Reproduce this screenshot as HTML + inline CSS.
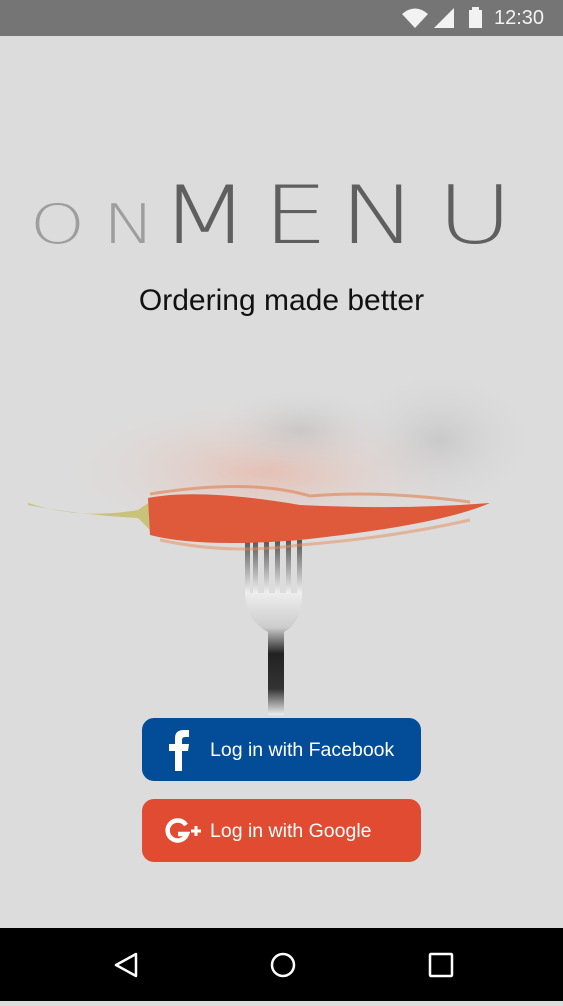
<!DOCTYPE html>
<html><head><meta charset="utf-8"><style>
html,body{margin:0;padding:0;}
body{width:563px;height:1001px;position:relative;background:#dcdcdc;overflow:hidden;font-family:"Liberation Sans",sans-serif;}
.sb{position:absolute;left:0;top:0;width:563px;height:36px;background:#757575;}
.time{position:absolute;left:494px;top:7px;color:#f2f2f2;font-size:20px;}
.nav{position:absolute;left:0;top:928px;width:563px;height:73px;background:#000;}
.logo{position:absolute;left:0;top:160px;}
.tag{position:absolute;left:0;width:563px;top:284px;text-align:center;font-size:30px;color:#111;font-family:"Liberation Sans",sans-serif;}
.btn{position:absolute;left:142px;width:279px;height:63px;border-radius:12px;color:#fff;font-size:19.5px;font-family:"Liberation Sans",sans-serif;}
.btn span{position:absolute;left:68px;top:21px;}
.fb{top:718px;background:#034c97;}
.gg{top:799px;background:#e04b32;}
</style></head><body>
<div class="sb">
<svg width="563" height="36" style="position:absolute;left:0;top:0">
<path d="M402 14 Q415 3 428 14 L415 28 Z" fill="#f2f2f2"/>
<path d="M434 28 L454 8 L454 28 Z" fill="#f2f2f2"/>
<rect x="469" y="10" width="13" height="18" fill="#f2f2f2"/><rect x="472" y="7" width="7" height="4" fill="#f2f2f2"/>
</svg>
<div class="time">12:30</div>
</div>
<svg class="logo" width="563" height="100">
<g transform="translate(0,83) scale(1.3,1)">
<text y="0" font-family="DejaVu Sans" font-weight="200" font-size="54" fill="#9e9e9e"><tspan x="23">O</tspan><tspan x="79">N</tspan></text>
<text y="0" font-family="DejaVu Sans" font-weight="200" font-size="80" fill="#5f5f5f"><tspan x="123">M</tspan><tspan x="202">E</tspan><tspan x="261">N</tspan><tspan x="336">U</tspan></text>
</g>
</svg>
<div class="tag">Ordering made better</div>
<svg width="563" height="360" style="position:absolute;left:0;top:360px">
<defs>
<radialGradient id="g1" cx="0.5" cy="0.5" r="0.5"><stop offset="0" stop-color="#e8b7a8" stop-opacity="0.8"/><stop offset="1" stop-color="#e0e0e0" stop-opacity="0"/></radialGradient>
<radialGradient id="g2" cx="0.5" cy="0.5" r="0.5"><stop offset="0" stop-color="#bdbdbd" stop-opacity="0.6"/><stop offset="1" stop-color="#e0e0e0" stop-opacity="0"/></radialGradient>
<linearGradient id="fk" x1="0" y1="0" x2="0" y2="1"><stop offset="0" stop-color="#555"/><stop offset="0.3" stop-color="#eee"/><stop offset="0.5" stop-color="#ccc"/><stop offset="0.65" stop-color="#222"/><stop offset="0.85" stop-color="#333"/><stop offset="1" stop-color="#eee"/></linearGradient>
</defs>
<ellipse cx="270" cy="110" rx="230" ry="80" fill="url(#g1)"/>
<ellipse cx="440" cy="80" rx="110" ry="80" fill="url(#g2)"/>
<ellipse cx="300" cy="70" rx="100" ry="50" fill="url(#g2)"/>
<path d="M245 180 L245 235 Q248 262 268 272 L268 355 L284 355 L284 272 Q302 262 302 235 L302 180 L297 180 L297 233 L291 233 L291 180 L286 180 L286 233 L280 233 L280 180 L275 180 L275 233 L269 233 L269 180 L264 180 L264 233 L258 233 L258 180 L253 180 L253 233 L250 233 L250 180 Z" fill="url(#fk)"/>
<path d="M28 143 Q80 160 138 150 L150 142 L150 170 L138 158 Q80 155 28 145 Z" fill="#c8c27a"/>
<path d="M148 138 Q200 128 300 145 Q400 150 490 143 Q440 165 300 180 Q200 188 150 175 Z" fill="#df5a3a"/>
<path d="M150 134 Q250 118 310 136 Q380 130 470 142" stroke="#e0814f" stroke-width="3" fill="none" opacity="0.6"/>
<path d="M160 180 Q230 195 300 185 Q390 178 470 160" stroke="#e68a55" stroke-width="3" fill="none" opacity="0.5"/>
</svg>
<div class="btn fb">
<svg width="40" height="63" style="position:absolute;left:20px;top:0"><path d="M13 53 L13 33 L7 33 L7 26 L13 26 L13 20 Q13 12 22 12 L27 12 L27 19 L23 19 Q20 19 20 22 L20 26 L27 26 L26 33 L20 33 L20 53 Z" fill="#fff"/></svg>
<span>Log in with Facebook</span></div>
<div class="btn gg">
<svg width="50" height="63" style="position:absolute;left:16px;top:0"><path d="M28 26 A10 10 0 1 0 29 35 L20 35" stroke="#fff" stroke-width="4.5" fill="none"/><path d="M33 32 L43 32 M38 27 L38 37" stroke="#fff" stroke-width="3"/></svg>
<span>Log in with Google</span></div>
<div class="nav">
<svg width="563" height="73">
<path d="M136 26 L116 37 L136 48 Z" stroke="#fff" stroke-width="2.5" fill="none" stroke-linejoin="round"/>
<circle cx="283" cy="37" r="11" stroke="#fff" stroke-width="2.5" fill="none"/>
<rect x="430" y="26" width="22" height="22" stroke="#fff" stroke-width="2.5" fill="none" rx="1"/>
</svg>
</div>
</body></html>
